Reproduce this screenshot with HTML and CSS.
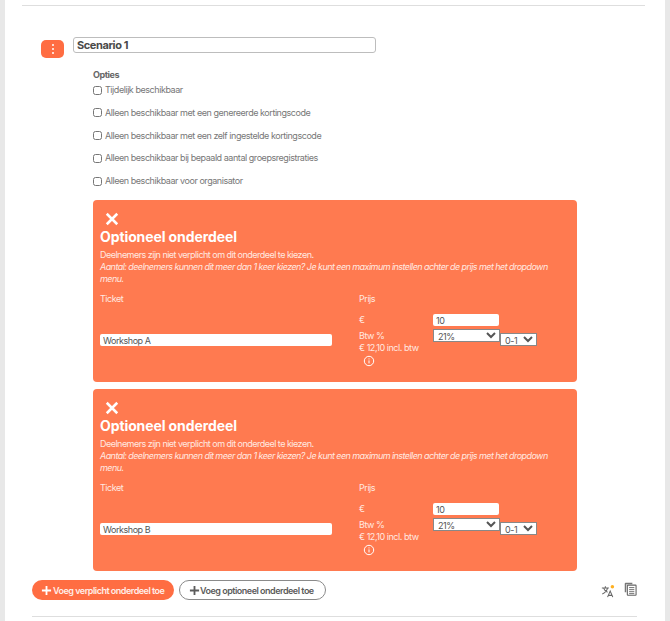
FILE: index.html
```html
<!DOCTYPE html>
<html lang="en">
  <head>
    <meta charset="UTF-8">
    <title>Scenario</title>
    <link rel="stylesheet" href="styles.css">
  </head>
  <body>
    <div class="page">
      <hr class="top-line">

      <div class="scenario-head">
        <div class="handle"><span></span><span></span><span></span></div>
        <input class="scenario-name" type="text" value="Scenario 1">
      </div>

      <div class="options">
        <p class="options-title">Opties</p>
        <label class="option"><input type="checkbox">Tijdelijk beschikbaar</label>
        <label class="option"><input type="checkbox">Alleen beschikbaar met een genereerde kortingscode</label>
        <label class="option"><input type="checkbox">Alleen beschikbaar met een zelf ingestelde kortingscode</label>
        <label class="option"><input type="checkbox">Alleen beschikbaar bij bepaald aantal groepsregistraties</label>
        <label class="option"><input type="checkbox">Alleen beschikbaar voor organisator</label>
      </div>

      <div class="card">
        <svg class="close" viewBox="0 0 12 12"><path d="M1.5 1.5l9 9M10.5 1.5l-9 9"/></svg>
        <h2 class="card-title">Optioneel onderdeel</h2>
        <p class="card-text">Deelnemers zijn niet verplicht om dit onderdeel te kiezen.<br>
        <em>Aantal: deelnemers kunnen dit meer dan 1 keer kiezen? Je kunt een maximum instellen achter de prijs met het dropdown menu.</em></p>
        <div class="ticket-row">
          <div class="ticket-col">
            <span class="col-label">Ticket</span>
            <input class="ticket-name" type="text" value="Workshop A">
          </div>
          <div class="price-col">
            <span class="col-label">Prijs</span>
            <div class="price-grid">
              <span class="price-label">€</span>
              <input class="price-input" type="text" value="10">
              <div class="vat-labels">
                <span>Btw %</span>
                <span>€ 12,10 incl. btw</span>
                <svg class="info" viewBox="0 0 12 12"><circle cx="6" cy="6" r="4.7"/><path d="M6 5.4v3M6 3.4v1"/></svg>
              </div>
              <div class="selects">
                <select class="vat-select"><option>21%</option></select>
                <select class="max-select"><option>0-1</option></select>
              </div>
            </div>
          </div>
        </div>
      </div>

      <div class="card">
        <svg class="close" viewBox="0 0 12 12"><path d="M1.5 1.5l9 9M10.5 1.5l-9 9"/></svg>
        <h2 class="card-title">Optioneel onderdeel</h2>
        <p class="card-text">Deelnemers zijn niet verplicht om dit onderdeel te kiezen.<br>
        <em>Aantal: deelnemers kunnen dit meer dan 1 keer kiezen? Je kunt een maximum instellen achter de prijs met het dropdown menu.</em></p>
        <div class="ticket-row">
          <div class="ticket-col">
            <span class="col-label">Ticket</span>
            <input class="ticket-name" type="text" value="Workshop B">
          </div>
          <div class="price-col">
            <span class="col-label">Prijs</span>
            <div class="price-grid">
              <span class="price-label">€</span>
              <input class="price-input" type="text" value="10">
              <div class="vat-labels">
                <span>Btw %</span>
                <span>€ 12,10 incl. btw</span>
                <svg class="info" viewBox="0 0 12 12"><circle cx="6" cy="6" r="4.7"/><path d="M6 5.4v3M6 3.4v1"/></svg>
              </div>
              <div class="selects">
                <select class="vat-select"><option>21%</option></select>
                <select class="max-select"><option>0-1</option></select>
              </div>
            </div>
          </div>
        </div>
      </div>

      <div class="actions">
        <button class="add-button add-solid"><svg class="plus" viewBox="0 0 12 12"><path d="M6 1v10M1 6h10"/></svg>Voeg verplicht onderdeel toe</button>
        <button class="add-button add-outline"><svg class="plus" viewBox="0 0 12 12"><path d="M6 1v10M1 6h10"/></svg>Voeg optioneel onderdeel toe</button>
        <div class="tools">
          <svg class="translate" viewBox="0 0 16 16">
            <path class="tr-line" d="M1 4.5h8M5 2.5v2M7.5 4.5c-.6 3-2.6 5.500-6 7M2.800 4.500c.8 2.400 2.400 4 4.700 5"/>
            <path class="tr-line" d="M7.500 15l3-7 3 7M8.500 13h4"/>
            <circle class="tr-dot" cx="13" cy="3" r="2"/>
          </svg>
          <svg class="copy" viewBox="0 0 14 15">
            <path class="copy-back" d="M.8 11V1.800q0-1 1-1H9v1.600H2.400V11z"/>
            <rect class="copy-page" x="3.600" y="3.300" width="9.400" height="11" rx=".6"/>
            <path class="copy-lines" d="M5.500 6h5.600M5.500 8.200h5.600M5.500 10.400h5.600M5.500 12.500h5.600"/>
          </svg>
        </div>
      </div>

      <hr class="bottom-line">
    </div>
  </body>
</html>
```

FILE: styles.css
```css
* {
    box-sizing: border-box;
}

html, body {
    margin: 0;
    height: 621px;
    overflow: hidden;
}

body {
    background-color: white;
    color: #5c5c5c;
    font-family: Inter, "Liberation Sans", sans-serif;
    font-size: 9px;
    letter-spacing: -0.45px;
    border-left: 5px solid #e8e8e8;
    border-right: 5px solid #e8e8e8;
}

.page {
    padding-top: 5px;
}

hr {
    border: none;
    height: 1px;
    background-color: #dedede;
    margin: 0;
}

.top-line {
    margin-left: 17px;
    margin-right: 20px;
}

.scenario-head {
    display: flex;
    align-items: flex-start;
    margin-top: 31px;
    margin-left: 36px;
}

.handle {
    width: 23px;
    height: 18px;
    margin-top: 3px;
    margin-right: 9px;
    background-color: #ff6d42;
    border-radius: 5px;
    display: flex;
    flex-direction: column;
    align-items: center;
    justify-content: center;
    gap: 2px;
}

.handle span {
    width: 2px;
    height: 2px;
    background-color: white;
    border-radius: 50%;
}

.scenario-name {
    width: 303px;
    height: 16px;
    border: 1px solid #bdbdbd;
    border-radius: 3px;
    padding: 0 3px;
    font-family: inherit;
    font-size: 11px;
    font-weight: 700;
    letter-spacing: -0.4px;
    color: #4a4a4a;
}

.options {
    margin-left: 88px;
    margin-top: 11px;
}

.options-title {
    margin: 0 0 3px;
    font-weight: 700;
    line-height: 12px;
    color: #666;
}

.option {
    display: flex;
    align-items: center;
    height: 12px;
    margin-bottom: 10.75px;
    line-height: 12px;
    color: #777;
}

.option input {
    width: 9px;
    height: 9px;
    margin: 0 3px 0 0;
}

.card {
    width: 484px;
    height: 182px;
    margin-left: 88px;
    margin-bottom: 7px;
    padding: 12px 7px 0;
    background-color: #ff7a50;
    border-radius: 4px;
    color: #ffe9e0;
}

.options + .card {
    margin-top: 13px;
}

.close {
    display: block;
    width: 14px;
    height: 14px;
    margin-left: 5px;
    fill: none;
    stroke: white;
    stroke-width: 2.2;
}

.card-title {
    margin: 2px 0 3px;
    font-size: 14px;
    line-height: 18px;
    font-weight: 700;
    letter-spacing: -0.1px;
    color: white;
}

.card-text {
    margin: 0 0 8px;
    line-height: 12px;
    letter-spacing: -0.52px;
}

.card-text em {
    letter-spacing: -0.56px;
}

.ticket-row {
    display: flex;
}

.ticket-col {
    width: 259px;
}

.col-label {
    display: block;
    line-height: 12px;
}

.ticket-name {
    display: block;
    width: 232px;
    height: 12px;
    margin-top: 29px;
    border: none;
    border-radius: 2px;
    padding: 0 3px;
    font-family: inherit;
    font-size: 9px;
    letter-spacing: inherit;
    color: #555;
}

.price-grid {
    display: grid;
    grid-template-columns: 74px auto;
    margin-top: 9px;
}

.price-label {
    line-height: 12px;
}

.price-input {
    width: 66px;
    height: 12px;
    border: none;
    border-radius: 2px;
    padding: 0 3px;
    font-family: inherit;
    font-size: 9px;
    letter-spacing: inherit;
    color: #555;
}

.vat-labels {
    display: flex;
    flex-direction: column;
    line-height: 11.5px;
    margin-top: 4px;
}

.info {
    width: 12px;
    height: 12px;
    margin: 2px 0 0 4px;
    fill: none;
    stroke: white;
    stroke-width: 1;
}

.selects {
    display: flex;
    align-items: flex-start;
    margin-top: 3px;
}

select {
    height: 13px;
    border: 1px solid #888;
    border-radius: 0;
    background-color: white;
    padding: 0;
    font-family: inherit;
    font-size: 9px;
    letter-spacing: inherit;
    color: #555;
}

.vat-select {
    width: 67px;
}

.max-select {
    width: 37px;
    margin-top: 4px;
}

.actions {
    display: flex;
    align-items: center;
    height: 20px;
    margin-top: 9px;
    margin-left: 27px;
}

.add-button {
    display: flex;
    align-items: center;
    height: 20px;
    border-radius: 10px;
    padding: 0 9px;
    font-family: inherit;
    font-size: 9px;
    font-weight: 600;
    letter-spacing: -0.5px;
    white-space: nowrap;
}

.add-solid {
    width: 142px;
    background-color: #ff6d42;
    border: none;
    color: #ffeee8;
}

.add-outline {
    width: 147px;
    margin-left: 5px;
    background-color: white;
    border: 1px solid #8a8a8a;
    color: #5c5c5c;
}

.plus {
    flex: none;
    width: 11px;
    height: 11px;
    margin-right: 1px;
    fill: none;
    stroke: currentColor;
    stroke-width: 2;
}

.add-solid .plus {
    stroke: white;
}

.add-outline .plus {
    margin-right: 0;
}

.tools {
    display: flex;
    align-items: center;
    gap: 9px;
    margin-left: auto;
    margin-right: 28px;
}

.translate {
    width: 14px;
    height: 14px;
    margin-top: 2px;
}

.tr-line {
    fill: none;
    stroke: #666;
    stroke-width: 1.2;
}

.tr-dot {
    fill: #ffb020;
}

.copy {
    width: 13px;
    height: 14px;
    margin-bottom: 2px;
}

.copy-back {
    fill: #777;
}

.copy-page {
    fill: white;
    stroke: #666;
    stroke-width: 1.2;
}

.copy-lines {
    stroke: #666;
    stroke-width: 1;
}

.bottom-line {
    margin-top: 16px;
    margin-left: 27px;
    margin-right: 28px;
}
```
